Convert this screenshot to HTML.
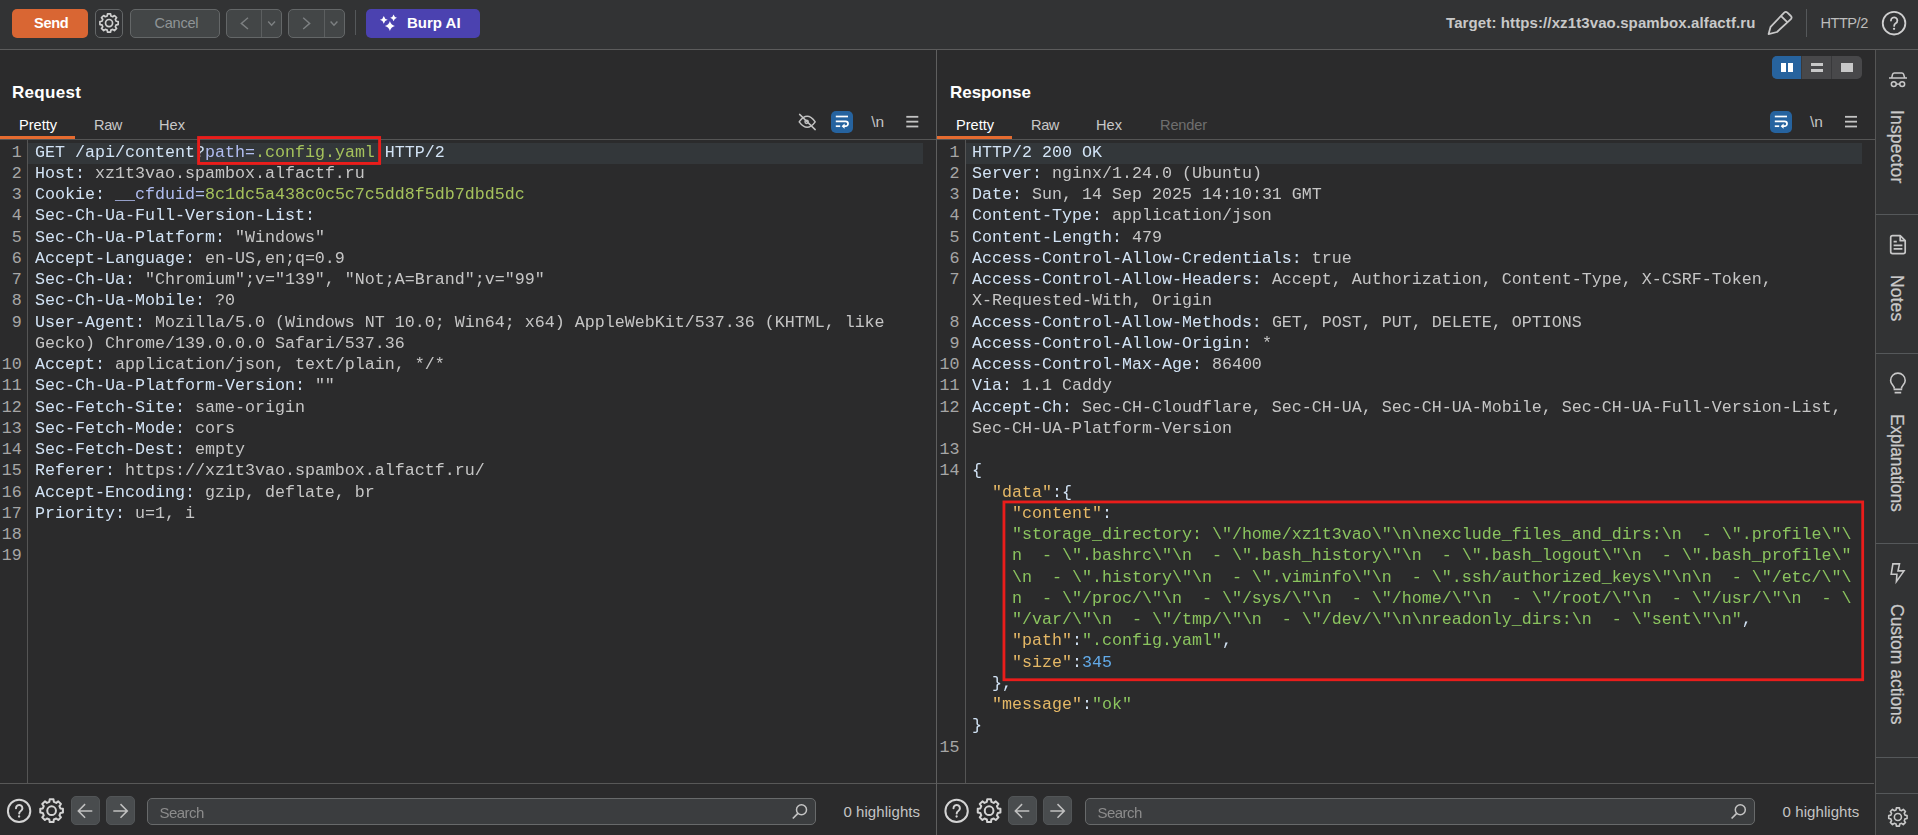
<!DOCTYPE html>
<html><head><meta charset="utf-8"><title>Burp Repeater</title>
<style>
*{box-sizing:border-box;margin:0;padding:0}
html,body{width:1918px;height:835px;overflow:hidden;background:#2b2b2c;font-family:"Liberation Sans",sans-serif;color:#c8c8c8}
.abs,.ln,.cl,.t{position:absolute}
.t{white-space:pre;line-height:1}
.ln,.cl{font-family:"Liberation Mono",monospace;font-size:16.667px;line-height:21.25px;height:21.25px;white-space:pre;margin-top:-1.5px}
.ln{color:#a6a6a6;text-align:right}
.cl{color:#c6c6c6}
.btn{position:absolute;border-radius:5px;border:1px solid #646768;background:#434647}
.hl{position:absolute;background:#33373a;height:21.25px}
.vline,.hline{position:absolute;background:#5a5a5a}
.red{position:absolute;border:3px solid #e0211d}
.layer{position:absolute;left:0;top:0;width:1918px;height:835px;will-change:transform}
svg{position:absolute;overflow:visible}
</style></head><body>

<!-- top toolbar -->
<div class="abs" style="left:0;top:0;width:1918px;height:49px;background:#323334"></div>
<div class="hline" style="left:0;top:49px;width:1918px;height:1px;background:#5c5c5c"></div>

<div class="abs" style="left:12px;top:9px;width:76px;height:29px;border-radius:5px;background:#d96633"></div>
<div class="t" style="left:34px;top:16.2px;font-size:14.6px;font-weight:700;color:#fff;letter-spacing:-0.35px">Send</div>

<div class="btn" style="left:95px;top:9px;width:28px;height:29px;background:#323335"></div>
<div class="btn" style="left:130px;top:9px;width:90px;height:29px"></div>
<div class="t" style="left:154.4px;top:16.2px;font-size:14.6px;color:#8f9496;letter-spacing:-0.25px">Cancel</div>

<div class="btn" style="left:226px;top:9px;width:56px;height:29px"></div>
<div class="vline" style="left:261px;top:10px;width:1px;height:27px;background:#5c5f60"></div>
<div class="btn" style="left:288px;top:9px;width:57px;height:29px"></div>
<div class="vline" style="left:324px;top:10px;width:1px;height:27px;background:#5c5f60"></div>
<div class="vline" style="left:355px;top:10px;width:1px;height:25px;background:#55585a"></div>

<div class="abs" style="left:366px;top:9px;width:114px;height:29px;border-radius:5px;background:#4b42b0"></div>
<div class="t" style="left:407px;top:15px;font-size:15px;font-weight:700;color:#fff">Burp AI</div>

<div class="t" style="left:1446px;top:15px;font-size:15px;font-weight:700;color:#c8c8c8;letter-spacing:0.11px">Target: https://xz1t3vao.spambox.alfactf.ru</div>
<div class="vline" style="left:1806px;top:9px;width:1px;height:28px;background:#55585a"></div>
<div class="t" style="left:1820.5px;top:16.2px;font-size:14.6px;color:#bdbdbd;letter-spacing:-0.5px">HTTP/2</div>

<!-- panel dividers -->
<div class="vline" style="left:936px;top:50px;width:1px;height:785px;background:#5f5f5f"></div>
<div class="abs" style="left:1876px;top:50px;width:42px;height:785px;background:#323334"></div>
<div class="vline" style="left:1875px;top:50px;width:1px;height:785px;background:#555"></div>

<!-- REQUEST PANEL -->
<div class="t" style="left:12px;top:84px;font-size:17px;font-weight:700;color:#fff;letter-spacing:0.3px">Request</div>
<div class="t" style="left:19px;top:117.8px;font-size:14.6px;color:#fff">Pretty</div>
<div class="t" style="left:94px;top:117.8px;font-size:14.6px;color:#c8c8c8;letter-spacing:-0.4px">Raw</div>
<div class="t" style="left:159px;top:117.8px;font-size:14.6px;color:#c8c8c8">Hex</div>
<div class="hline" style="left:0;top:139px;width:936px;height:1px;background:#555"></div>
<div class="abs" style="left:0;top:136px;width:75px;height:3px;background:#e56b30"></div>
<div class="vline" style="left:27px;top:140px;width:1px;height:643px;background:#555"></div>
<div class="hl" style="left:28px;top:143px;width:895px"></div>
<div class="hline" style="left:0;top:783px;width:936px;height:1px;background:#585858"></div>
<div class="ln" style="top:143.00px;left:-18.3px;width:40px">1</div>
<div class="ln" style="top:164.25px;left:-18.3px;width:40px">2</div>
<div class="ln" style="top:185.50px;left:-18.3px;width:40px">3</div>
<div class="ln" style="top:206.75px;left:-18.3px;width:40px">4</div>
<div class="ln" style="top:228.00px;left:-18.3px;width:40px">5</div>
<div class="ln" style="top:249.25px;left:-18.3px;width:40px">6</div>
<div class="ln" style="top:270.50px;left:-18.3px;width:40px">7</div>
<div class="ln" style="top:291.75px;left:-18.3px;width:40px">8</div>
<div class="ln" style="top:313.00px;left:-18.3px;width:40px">9</div>
<div class="ln" style="top:355.50px;left:-18.3px;width:40px">10</div>
<div class="ln" style="top:376.75px;left:-18.3px;width:40px">11</div>
<div class="ln" style="top:398.00px;left:-18.3px;width:40px">12</div>
<div class="ln" style="top:419.25px;left:-18.3px;width:40px">13</div>
<div class="ln" style="top:440.50px;left:-18.3px;width:40px">14</div>
<div class="ln" style="top:461.75px;left:-18.3px;width:40px">15</div>
<div class="ln" style="top:483.00px;left:-18.3px;width:40px">16</div>
<div class="ln" style="top:504.25px;left:-18.3px;width:40px">17</div>
<div class="ln" style="top:525.50px;left:-18.3px;width:40px">18</div>
<div class="ln" style="top:546.75px;left:-18.3px;width:40px">19</div>

<!-- RESPONSE PANEL -->
<div class="t" style="left:950px;top:84px;font-size:17px;font-weight:700;color:#fff;letter-spacing:-0.05px">Response</div>
<div class="t" style="left:956px;top:117.8px;font-size:14.6px;color:#fff">Pretty</div>
<div class="t" style="left:1031px;top:117.8px;font-size:14.6px;color:#c8c8c8;letter-spacing:-0.4px">Raw</div>
<div class="t" style="left:1096px;top:117.8px;font-size:14.6px;color:#c8c8c8">Hex</div>
<div class="t" style="left:1160px;top:117.8px;font-size:14.6px;color:#6f6f6f;letter-spacing:-0.15px">Render</div>
<div class="hline" style="left:937px;top:139px;width:938px;height:1px;background:#555"></div>
<div class="abs" style="left:937px;top:136px;width:75px;height:3px;background:#e56b30"></div>
<div class="vline" style="left:965px;top:140px;width:1px;height:643px;background:#555"></div>
<div class="hl" style="left:966px;top:143px;width:896px"></div>
<div class="hline" style="left:937px;top:783px;width:937px;height:1px;background:#585858"></div>
<div class="ln" style="top:143.00px;left:919.5px;width:40px">1</div>
<div class="ln" style="top:164.25px;left:919.5px;width:40px">2</div>
<div class="ln" style="top:185.50px;left:919.5px;width:40px">3</div>
<div class="ln" style="top:206.75px;left:919.5px;width:40px">4</div>
<div class="ln" style="top:228.00px;left:919.5px;width:40px">5</div>
<div class="ln" style="top:249.25px;left:919.5px;width:40px">6</div>
<div class="ln" style="top:270.50px;left:919.5px;width:40px">7</div>
<div class="ln" style="top:313.00px;left:919.5px;width:40px">8</div>
<div class="ln" style="top:334.25px;left:919.5px;width:40px">9</div>
<div class="ln" style="top:355.50px;left:919.5px;width:40px">10</div>
<div class="ln" style="top:376.75px;left:919.5px;width:40px">11</div>
<div class="ln" style="top:398.00px;left:919.5px;width:40px">12</div>
<div class="ln" style="top:440.50px;left:919.5px;width:40px">13</div>
<div class="ln" style="top:461.75px;left:919.5px;width:40px">14</div>
<div class="ln" style="top:738.00px;left:919.5px;width:40px">15</div>

<svg width="1918" height="835" style="left:0;top:0"><path d="M107.22,15.98 L107.52,13.93 L110.58,13.93 L110.88,15.98 L112.76,16.75 L114.42,15.52 L116.58,17.68 L115.35,19.34 L116.12,21.22 L118.17,21.52 L118.17,24.58 L116.12,24.88 L115.35,26.76 L116.58,28.42 L114.42,30.58 L112.76,29.35 L110.88,30.12 L110.58,32.17 L107.52,32.17 L107.22,30.12 L105.34,29.35 L103.68,30.58 L101.52,28.42 L102.75,26.76 L101.98,24.88 L99.93,24.58 L99.93,21.52 L101.98,21.22 L102.75,19.34 L101.52,17.68 L103.68,15.52 L105.34,16.75Z" fill="none" stroke="#cfcfcf" stroke-width="1.7" stroke-linejoin="round"/><circle cx="109.05" cy="23.05" r="3.53" fill="none" stroke="#cfcfcf" stroke-width="1.7"/></svg>
<svg width="1918" height="835" style="left:0;top:0"><g fill="none" stroke="#7d8082" stroke-width="1.4"><path d="M248,17.8 L241.3,23.4 L248,29"/><path d="M268.2,21.5 L271.6,25.2 L275,21.5"/><path d="M303.2,17.8 L309.7,23.4 L303.2,29"/><path d="M330.6,21.5 L334,25.2 L337.4,21.5"/></g></svg>
<svg width="1918" height="835" style="left:0;top:0"><path d="M383.8,15.9 Q384.58,19.02 387.7,19.8 Q384.58,20.580000000000002 383.8,23.7 Q383.02000000000004,20.580000000000002 379.90000000000003,19.8 Q383.02000000000004,19.02 383.8,15.9Z M393.6,14.4 Q394.28000000000003,17.12 397.0,17.8 Q394.28000000000003,18.48 393.6,21.2 Q392.92,18.48 390.20000000000005,17.8 Q392.92,17.12 393.6,14.4Z M389.9,20.9 Q390.9,24.9 394.9,25.9 Q390.9,26.9 389.9,30.9 Q388.9,26.9 384.9,25.9 Q388.9,24.9 389.9,20.9Z" fill="#fff"/></svg>
<svg width="1918" height="835" style="left:0;top:0"><g fill="none" stroke="#c8c8c8" stroke-width="1.8" stroke-linejoin="round" stroke-linecap="round"><path d="M1768.6,34.1 L1770.6,26.8 L1784.2,12.6 Q1785.8,11.2 1787.4,12.6 L1790.9,16.0 Q1792.3,17.6 1790.9,19.2 L1777,32.0 Z"/><path d="M1781.4,16.4 L1787,21.9"/></g></svg>
<svg width="1918" height="835" style="left:0;top:0"><circle cx="1894.05" cy="23.2" r="11.30" fill="none" stroke="#cfcfcf" stroke-width="1.8"/><path d="M1890.95,20.50 a3.2,3.2 0 1 1 4.8,2.8 c-1.2,0.8 -1.6,1.4 -1.6,2.6" fill="none" stroke="#cfcfcf" stroke-width="1.8" stroke-linecap="round"/><circle cx="1894.05" cy="28.80" r="1.15" fill="#cfcfcf"/></svg>
<svg width="1918" height="835" style="left:0;top:0"><g fill="none" stroke="#c2c2c2" stroke-width="1.5" stroke-linecap="round"><path d="M799.2,121.9 Q807.2,110.8 815.2,121.9 Q807.2,132.8 799.2,121.9Z" stroke-linejoin="round"/><circle cx="806.6" cy="121.8" r="1.6"/><path d="M799.6,114.4 L815.2,129.6"/></g></svg>
<div class="abs" style="left:831px;top:111px;width:22px;height:22px;border-radius:5px;background:#26639f"></div><svg width="1918" height="835" style="left:0;top:0"><g fill="none" stroke="#fff" stroke-width="1.7" stroke-linecap="butt"><path d="M835.8,116.5 H848"/><path d="M835.8,121.3 H845.6 a2.45,2.45 0 0 1 0,4.9 H843.2"/><path d="M835.8,126.2 H840.2"/></g><path d="M841.6,126.2 l3.0,-2.6 v5.2 z" fill="#fff"/></svg>
<div class="t" style="left:871.2px;top:114px;font-size:15.5px;color:#c4c4c4">\n</div>
<svg width="1918" height="835" style="left:0;top:0"><rect x="906.3" y="115.9" width="12" height="1.8" fill="#c4c4c4"/><rect x="906.3" y="120.75" width="12" height="1.8" fill="#c4c4c4"/><rect x="906.3" y="125.60000000000001" width="12" height="1.8" fill="#c4c4c4"/></svg>
<div class="abs" style="left:1770px;top:111px;width:22px;height:22px;border-radius:5px;background:#26639f"></div><svg width="1918" height="835" style="left:0;top:0"><g fill="none" stroke="#fff" stroke-width="1.7" stroke-linecap="butt"><path d="M1774.8,116.5 H1787"/><path d="M1774.8,121.3 H1784.6 a2.45,2.45 0 0 1 0,4.9 H1782.2"/><path d="M1774.8,126.2 H1779.2"/></g><path d="M1780.6,126.2 l3.0,-2.6 v5.2 z" fill="#fff"/></svg>
<div class="t" style="left:1810px;top:114px;font-size:15.5px;color:#c4c4c4">\n</div>
<svg width="1918" height="835" style="left:0;top:0"><rect x="1845" y="115.9" width="12" height="1.8" fill="#c4c4c4"/><rect x="1845" y="120.75" width="12" height="1.8" fill="#c4c4c4"/><rect x="1845" y="125.60000000000001" width="12" height="1.8" fill="#c4c4c4"/></svg>
<div class="abs" style="left:1772px;top:56px;width:90px;height:23px;border-radius:5px;background:#48484a;overflow:hidden"><div class="abs" style="left:0;top:0;width:29px;height:23px;background:#27639e"></div><div class="abs" style="left:29px;top:0;width:1px;height:23px;background:#39393b"></div><div class="abs" style="left:59px;top:0;width:1px;height:23px;background:#39393b"></div><div class="abs" style="left:9px;top:6.7px;width:5.1px;height:9.5px;background:#fff"></div><div class="abs" style="left:16px;top:6.7px;width:5.2px;height:9.5px;background:#fff"></div><div class="abs" style="left:39.1px;top:6.7px;width:12px;height:3.4px;background:#c8c8c8"></div><div class="abs" style="left:39.1px;top:12.9px;width:12px;height:3.3px;background:#c8c8c8"></div><div class="abs" style="left:69.2px;top:6.7px;width:11.9px;height:9.5px;background:#c8c8c8"></div></div>
<svg width="1918" height="835" style="left:0;top:0"><circle cx="19.1" cy="810.9" r="11.20" fill="none" stroke="#d4d4d4" stroke-width="2.0"/><path d="M16.00,808.20 a3.2,3.2 0 1 1 4.8,2.8 c-1.2,0.8 -1.6,1.4 -1.6,2.6" fill="none" stroke="#d4d4d4" stroke-width="2.0" stroke-linecap="round"/><circle cx="19.1" cy="816.50" r="1.15" fill="#d4d4d4"/></svg>
<svg width="1918" height="835" style="left:0;top:0"><path d="M49.33,801.90 L49.70,799.36 L53.50,799.36 L53.87,801.90 L56.21,802.87 L58.28,801.34 L60.96,804.02 L59.43,806.09 L60.40,808.43 L62.94,808.80 L62.94,812.60 L60.40,812.97 L59.43,815.31 L60.96,817.38 L58.28,820.06 L56.21,818.53 L53.87,819.50 L53.50,822.04 L49.70,822.04 L49.33,819.50 L46.99,818.53 L44.92,820.06 L42.24,817.38 L43.77,815.31 L42.80,812.97 L40.26,812.60 L40.26,808.80 L42.80,808.43 L43.77,806.09 L42.24,804.02 L44.92,801.34 L46.99,802.87Z" fill="none" stroke="#d4d4d4" stroke-width="2.0" stroke-linejoin="round"/><circle cx="51.6" cy="810.7" r="4.35" fill="none" stroke="#d4d4d4" stroke-width="2.0"/></svg>
<div class="abs" style="left:71px;top:796px;width:29px;height:29px;border-radius:5px;background:#494c4e;border:1px solid #525557"></div>
<svg width="1918" height="835" style="left:0;top:0"><path d="M92.3,810.9 H78.7 M85.1,804.1 L78.3,810.9 L85.1,817.6999999999999" fill="none" stroke="#c0c0c0" stroke-width="1.5"/></svg>
<div class="abs" style="left:106px;top:796px;width:29px;height:29px;border-radius:5px;background:#494c4e;border:1px solid #525557"></div>
<svg width="1918" height="835" style="left:0;top:0"><path d="M113.3,810.9 H126.89999999999999 M120.5,804.1 L127.3,810.9 L120.5,817.6999999999999" fill="none" stroke="#c0c0c0" stroke-width="1.5"/></svg>
<div class="abs" style="left:147px;top:798px;width:669px;height:27px;border-radius:5px;background:#3b3d3f;border:1px solid #686a6b"></div>
<svg width="1918" height="835" style="left:0;top:0"><circle cx="801.5" cy="809.8" r="5.0" fill="none" stroke="#c4c4c4" stroke-width="1.5"/><path d="M797.9,813.4 L792.8,818.5" stroke="#c4c4c4" stroke-width="1.7" fill="none"/></svg>
<div class="t" style="left:843.4px;top:804px;font-size:15px;letter-spacing:0.07px;color:#c4c4c4">0 highlights</div>
<svg width="1918" height="835" style="left:0;top:0"><circle cx="956.6" cy="810.9" r="11.20" fill="none" stroke="#d4d4d4" stroke-width="2.0"/><path d="M953.50,808.20 a3.2,3.2 0 1 1 4.8,2.8 c-1.2,0.8 -1.6,1.4 -1.6,2.6" fill="none" stroke="#d4d4d4" stroke-width="2.0" stroke-linecap="round"/><circle cx="956.6" cy="816.50" r="1.15" fill="#d4d4d4"/></svg>
<svg width="1918" height="835" style="left:0;top:0"><path d="M986.83,801.90 L987.20,799.36 L991.00,799.36 L991.37,801.90 L993.71,802.87 L995.78,801.34 L998.46,804.02 L996.93,806.09 L997.90,808.43 L1000.44,808.80 L1000.44,812.60 L997.90,812.97 L996.93,815.31 L998.46,817.38 L995.78,820.06 L993.71,818.53 L991.37,819.50 L991.00,822.04 L987.20,822.04 L986.83,819.50 L984.49,818.53 L982.42,820.06 L979.74,817.38 L981.27,815.31 L980.30,812.97 L977.76,812.60 L977.76,808.80 L980.30,808.43 L981.27,806.09 L979.74,804.02 L982.42,801.34 L984.49,802.87Z" fill="none" stroke="#d4d4d4" stroke-width="2.0" stroke-linejoin="round"/><circle cx="989.1" cy="810.7" r="4.35" fill="none" stroke="#d4d4d4" stroke-width="2.0"/></svg>
<div class="abs" style="left:1008px;top:796px;width:29px;height:29px;border-radius:5px;background:#494c4e;border:1px solid #525557"></div>
<svg width="1918" height="835" style="left:0;top:0"><path d="M1029.3,810.9 H1015.6999999999999 M1022.0999999999999,804.1 L1015.3,810.9 L1022.0999999999999,817.6999999999999" fill="none" stroke="#c0c0c0" stroke-width="1.5"/></svg>
<div class="abs" style="left:1043px;top:796px;width:29px;height:29px;border-radius:5px;background:#494c4e;border:1px solid #525557"></div>
<svg width="1918" height="835" style="left:0;top:0"><path d="M1050.3,810.9 H1063.8999999999999 M1057.5,804.1 L1064.3,810.9 L1057.5,817.6999999999999" fill="none" stroke="#c0c0c0" stroke-width="1.5"/></svg>
<div class="abs" style="left:1085px;top:798px;width:670px;height:27px;border-radius:5px;background:#3b3d3f;border:1px solid #686a6b"></div>
<svg width="1918" height="835" style="left:0;top:0"><circle cx="1740.3" cy="809.8" r="5.0" fill="none" stroke="#c4c4c4" stroke-width="1.5"/><path d="M1736.7,813.4 L1731.6,818.5" stroke="#c4c4c4" stroke-width="1.7" fill="none"/></svg>
<div class="t" style="left:1782.6px;top:804px;font-size:15px;letter-spacing:0.07px;color:#c4c4c4">0 highlights</div>
<div class="hline" style="left:1876px;top:214px;width:42px;height:1px;background:#55585a"></div>
<div class="hline" style="left:1876px;top:353px;width:42px;height:1px;background:#55585a"></div>
<div class="hline" style="left:1876px;top:543px;width:42px;height:1px;background:#55585a"></div>
<div class="hline" style="left:1876px;top:757px;width:42px;height:1px;background:#55585a"></div>
<div class="hline" style="left:1876px;top:793px;width:42px;height:1px;background:#55585a"></div>
<svg width="1918" height="835" style="left:0;top:0"><g fill="none" stroke="#c8c8c8" stroke-width="1.5" stroke-linejoin="round"><path d="M1889,78 H1907"/><path d="M1891.7,78 L1892.6,74.2 Q1893,73.1 1894.4,73.1 L1901.8,73.1 Q1903.2,73.1 1903.6,74.2 L1904.7,78"/><circle cx="1893.8" cy="84.1" r="2.45"/><circle cx="1902.2" cy="84.1" r="2.45"/><path d="M1896.3,84.1 H1899.7"/></g></svg>
<svg width="1918" height="835" style="left:0;top:0"><g fill="none" stroke="#c8c8c8" stroke-width="1.7" stroke-linejoin="round"><path d="M1892.6,235.7 H1900.2 L1905.2,240.7 V251.8 Q1905.2,253.7 1903.3,253.7 H1892.6 Q1890.7,253.7 1890.7,251.8 V237.6 Q1890.7,235.7 1892.6,235.7Z"/><path d="M1900.2,235.9 V240.7 H1905"/><path d="M1893.6,241.7 H1896.8 M1893.6,245.4 H1902.4 M1893.6,248.9 H1902.4"/></g></svg>
<svg width="1918" height="835" style="left:0;top:0"><g fill="none" stroke="#c8c8c8" stroke-width="1.6" stroke-linejoin="round"><path d="M1894.4,388.6 C1894.2,385.5 1890.6,384.2 1890.6,380.4 A7.3,7.3 0 0 1 1905.2,380.4 C1905.2,384.2 1901.6,385.5 1901.4,388.6"/><path d="M1893.6,389.4 H1902.2 M1894.6,392.6 H1901.2" stroke-width="1.8"/></g></svg>
<svg width="1918" height="835" style="left:0;top:0"><path d="M1892.9,563.9 H1899.5 L1898,570.9 H1904 L1896.4,581.6 L1896.9,574.2 H1891.2 Z" fill="none" stroke="#c8c8c8" stroke-width="1.6" stroke-linejoin="miter"/></svg>
<svg width="1918" height="835" style="left:0;top:0"><path d="M1896.06,809.89 L1896.37,807.83 L1899.43,807.83 L1899.74,809.89 L1901.63,810.67 L1903.30,809.43 L1905.47,811.60 L1904.23,813.27 L1905.01,815.16 L1907.07,815.47 L1907.07,818.53 L1905.01,818.84 L1904.23,820.73 L1905.47,822.40 L1903.30,824.57 L1901.63,823.33 L1899.74,824.11 L1899.43,826.17 L1896.37,826.17 L1896.06,824.11 L1894.17,823.33 L1892.50,824.57 L1890.33,822.40 L1891.57,820.73 L1890.79,818.84 L1888.73,818.53 L1888.73,815.47 L1890.79,815.16 L1891.57,813.27 L1890.33,811.60 L1892.50,809.43 L1894.17,810.67Z" fill="none" stroke="#c8c8c8" stroke-width="1.6" stroke-linejoin="round"/><circle cx="1897.9" cy="817" r="3.53" fill="none" stroke="#c8c8c8" stroke-width="1.6"/></svg>
<div class="t" style="left:1905.4px;top:110.0px;font-size:17.5px;letter-spacing:0.17px;color:#cacaca;-webkit-text-stroke:0.25px #cacaca;transform-origin:0 0;transform:rotate(90deg)">Inspector</div>
<div class="t" style="left:1905.4px;top:274.6px;font-size:17.5px;letter-spacing:0.12px;color:#cacaca;-webkit-text-stroke:0.25px #cacaca;transform-origin:0 0;transform:rotate(90deg)">Notes</div>
<div class="t" style="left:1905.4px;top:413.7px;font-size:17.5px;letter-spacing:-0.22px;color:#cacaca;-webkit-text-stroke:0.25px #cacaca;transform-origin:0 0;transform:rotate(90deg)">Explanations</div>
<div class="t" style="left:1905.4px;top:603.6px;font-size:17.5px;letter-spacing:0px;color:#cacaca;-webkit-text-stroke:0.25px #cacaca;transform-origin:0 0;transform:rotate(90deg)">Custom actions</div>
<div class="layer"><div class="cl" style="top:143.00px;left:35px"><span style="color:#d2e3f5">GET /api/content</span><span style="display:inline-block;color:#d2e3f5;clip-path:inset(0 0 0 3px)">?</span><span style="color:#b1bdf0">path=</span><span style="color:#a5c25c">.config.yaml</span><span style="color:#d2e3f5"> HTTP/2</span></div>
<div class="cl" style="top:164.25px;left:35px"><span style="color:#d2e3f5">Host: </span><span style="color:#c6c6c6">xz1t3vao.spambox.alfactf.ru</span></div>
<div class="cl" style="top:185.50px;left:35px"><span style="color:#d2e3f5">Cookie: </span><span style="color:#b1bdf0">__cfduid=</span><span style="color:#a5c25c">8c1dc5a438c0c5c7c5dd8f5db7dbd5dc</span></div>
<div class="cl" style="top:206.75px;left:35px"><span style="color:#d2e3f5">Sec-Ch-Ua-Full-Version-List: </span></div>
<div class="cl" style="top:228.00px;left:35px"><span style="color:#d2e3f5">Sec-Ch-Ua-Platform: </span><span style="color:#c6c6c6">"Windows"</span></div>
<div class="cl" style="top:249.25px;left:35px"><span style="color:#d2e3f5">Accept-Language: </span><span style="color:#c6c6c6">en-US,en;q=0.9</span></div>
<div class="cl" style="top:270.50px;left:35px"><span style="color:#d2e3f5">Sec-Ch-Ua: </span><span style="color:#c6c6c6">"Chromium";v="139", "Not;A=Brand";v="99"</span></div>
<div class="cl" style="top:291.75px;left:35px"><span style="color:#d2e3f5">Sec-Ch-Ua-Mobile: </span><span style="color:#c6c6c6">?0</span></div>
<div class="cl" style="top:313.00px;left:35px"><span style="color:#d2e3f5">User-Agent: </span><span style="color:#c6c6c6">Mozilla/5.0 (Windows NT 10.0; Win64; x64) AppleWebKit/537.36 (KHTML, like</span></div>
<div class="cl" style="top:334.25px;left:35px"><span style="color:#c6c6c6">Gecko) Chrome/139.0.0.0 Safari/537.36</span></div>
<div class="cl" style="top:355.50px;left:35px"><span style="color:#d2e3f5">Accept: </span><span style="color:#c6c6c6">application/json, text/plain, */*</span></div>
<div class="cl" style="top:376.75px;left:35px"><span style="color:#d2e3f5">Sec-Ch-Ua-Platform-Version: </span><span style="color:#c6c6c6">""</span></div>
<div class="cl" style="top:398.00px;left:35px"><span style="color:#d2e3f5">Sec-Fetch-Site: </span><span style="color:#c6c6c6">same-origin</span></div>
<div class="cl" style="top:419.25px;left:35px"><span style="color:#d2e3f5">Sec-Fetch-Mode: </span><span style="color:#c6c6c6">cors</span></div>
<div class="cl" style="top:440.50px;left:35px"><span style="color:#d2e3f5">Sec-Fetch-Dest: </span><span style="color:#c6c6c6">empty</span></div>
<div class="cl" style="top:461.75px;left:35px"><span style="color:#d2e3f5">Referer: </span><span style="color:#c6c6c6">https://xz1t3vao.spambox.alfactf.ru/</span></div>
<div class="cl" style="top:483.00px;left:35px"><span style="color:#d2e3f5">Accept-Encoding: </span><span style="color:#c6c6c6">gzip, deflate, br</span></div>
<div class="cl" style="top:504.25px;left:35px"><span style="color:#d2e3f5">Priority: </span><span style="color:#c6c6c6">u=1, i</span></div>
<div class="t" style="left:159.4px;top:804.5px;font-size:15px;letter-spacing:-0.5px;color:#8c8c8c">Search</div>
<div class="t" style="left:1097.4px;top:804.5px;font-size:15px;letter-spacing:-0.5px;color:#8c8c8c">Search</div><div class="cl" style="top:143.00px;left:972px"><span style="color:#d2e3f5">HTTP/2 200 OK</span></div>
<div class="cl" style="top:164.25px;left:972px"><span style="color:#d2e3f5">Server: </span><span style="color:#c6c6c6">nginx/1.24.0 (Ubuntu)</span></div>
<div class="cl" style="top:185.50px;left:972px"><span style="color:#d2e3f5">Date: </span><span style="color:#c6c6c6">Sun, 14 Sep 2025 14:10:31 GMT</span></div>
<div class="cl" style="top:206.75px;left:972px"><span style="color:#d2e3f5">Content-Type: </span><span style="color:#c6c6c6">application/json</span></div>
<div class="cl" style="top:228.00px;left:972px"><span style="color:#d2e3f5">Content-Length: </span><span style="color:#c6c6c6">479</span></div>
<div class="cl" style="top:249.25px;left:972px"><span style="color:#d2e3f5">Access-Control-Allow-Credentials: </span><span style="color:#c6c6c6">true</span></div>
<div class="cl" style="top:270.50px;left:972px"><span style="color:#d2e3f5">Access-Control-Allow-Headers: </span><span style="color:#c6c6c6">Accept, Authorization, Content-Type, X-CSRF-Token,</span></div>
<div class="cl" style="top:291.75px;left:972px"><span style="color:#c6c6c6">X-Requested-With, Origin</span></div>
<div class="cl" style="top:313.00px;left:972px"><span style="color:#d2e3f5">Access-Control-Allow-Methods: </span><span style="color:#c6c6c6">GET, POST, PUT, DELETE, OPTIONS</span></div>
<div class="cl" style="top:334.25px;left:972px"><span style="color:#d2e3f5">Access-Control-Allow-Origin: </span><span style="color:#c6c6c6">*</span></div>
<div class="cl" style="top:355.50px;left:972px"><span style="color:#d2e3f5">Access-Control-Max-Age: </span><span style="color:#c6c6c6">86400</span></div>
<div class="cl" style="top:376.75px;left:972px"><span style="color:#d2e3f5">Via: </span><span style="color:#c6c6c6">1.1 Caddy</span></div>
<div class="cl" style="top:398.00px;left:972px"><span style="color:#d2e3f5">Accept-Ch: </span><span style="color:#c6c6c6">Sec-CH-Cloudflare, Sec-CH-UA, Sec-CH-UA-Mobile, Sec-CH-UA-Full-Version-List,</span></div>
<div class="cl" style="top:419.25px;left:972px"><span style="color:#c6c6c6">Sec-CH-UA-Platform-Version</span></div>
<div class="cl" style="top:461.75px;left:972px"><span style="color:#d2e3f5">{</span></div>
<div class="cl" style="top:483.00px;left:972px">  <span style="color:#e5b866">"data"</span><span style="color:#d2e3f5">:{</span></div>
<div class="cl" style="top:504.25px;left:972px">    <span style="color:#e5b866">"content"</span><span style="color:#d2e3f5">:</span></div>
<div class="cl" style="top:525.50px;left:972px">    <span style="color:#8bc45f">"storage_directory: \"/home/xz1t3vao\"\n\nexclude_files_and_dirs:\n  - \".profile\"\</span></div>
<div class="cl" style="top:546.75px;left:972px">    <span style="color:#8bc45f">n  - \".bashrc\"\n  - \".bash_history\"\n  - \".bash_logout\"\n  - \".bash_profile\"</span></div>
<div class="cl" style="top:568.00px;left:972px">    <span style="color:#8bc45f">\n  - \".history\"\n  - \".viminfo\"\n  - \".ssh/authorized_keys\"\n\n  - \"/etc/\"\</span></div>
<div class="cl" style="top:589.25px;left:972px">    <span style="color:#8bc45f">n  - \"/proc/\"\n  - \"/sys/\"\n  - \"/home/\"\n  - \"/root/\"\n  - \"/usr/\"\n  - \</span></div>
<div class="cl" style="top:610.50px;left:972px">    <span style="color:#8bc45f">"/var/\"\n  - \"/tmp/\"\n  - \"/dev/\"\n\nreadonly_dirs:\n  - \"sent\"\n"</span><span style="color:#d2e3f5">,</span></div>
<div class="cl" style="top:631.75px;left:972px">    <span style="color:#e5b866">"path"</span><span style="color:#d2e3f5">:</span><span style="color:#8bc45f">".config.yaml"</span><span style="color:#d2e3f5">,</span></div>
<div class="cl" style="top:653.00px;left:972px">    <span style="color:#e5b866">"size"</span><span style="color:#d2e3f5">:</span><span style="color:#62aae8">345</span></div>
<div class="cl" style="top:674.25px;left:972px">  <span style="color:#d2e3f5">},</span></div>
<div class="cl" style="top:695.50px;left:972px">  <span style="color:#e5b866">"message"</span><span style="color:#d2e3f5">:</span><span style="color:#8bc45f">"ok"</span></div>
<div class="cl" style="top:716.75px;left:972px"><span style="color:#d2e3f5">}</span></div></div>
<svg width="1918" height="835" style="left:0;top:0"><rect x="198.6" y="137.55" width="181" height="25.9" fill="none" stroke="#ea1d1b" stroke-width="2.9"/><rect x="1003.95" y="501.95" width="858.75" height="177.8" fill="none" stroke="#ea1d1b" stroke-width="2.8"/></svg>
</body></html>
